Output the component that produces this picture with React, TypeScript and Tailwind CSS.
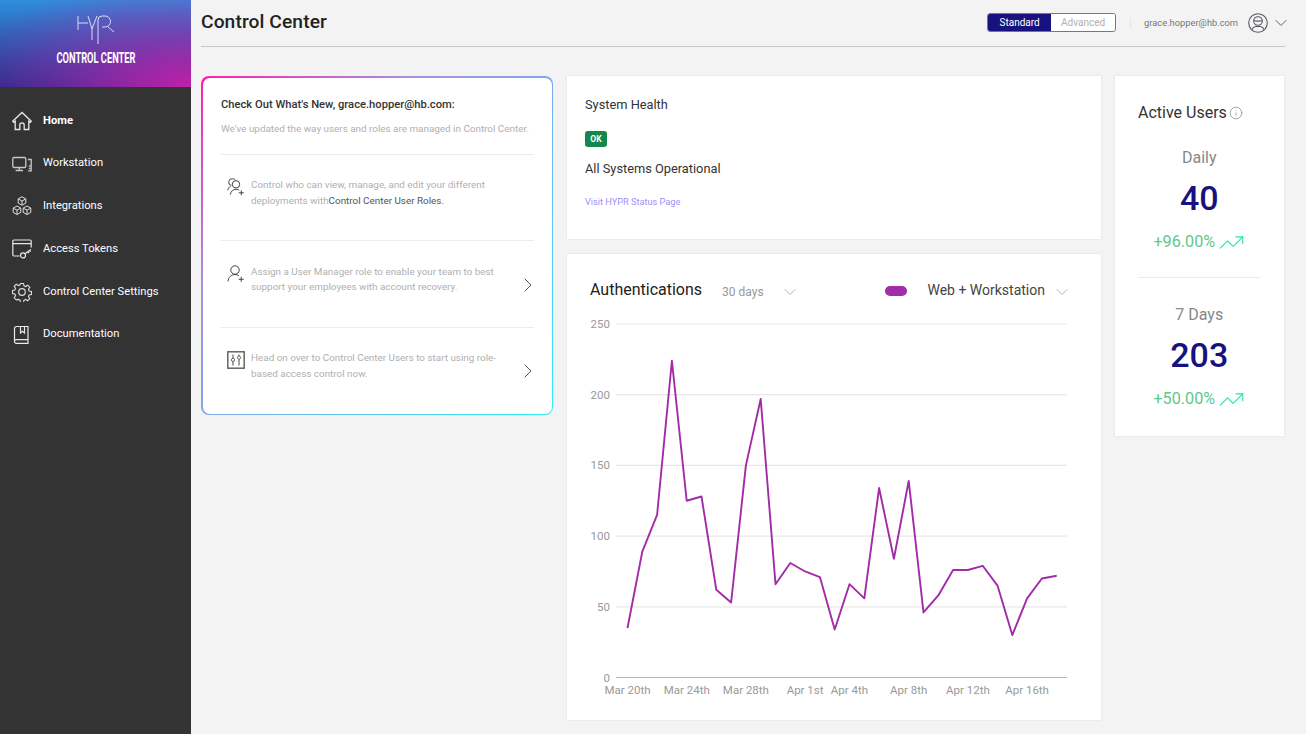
import React from 'react';
import { ChevronDown, ChevronRight, Info, TrendingUp } from 'lucide-react';

const points = [35, 89, 115, 224, 125, 128, 62, 53, 150, 197, 66, 81, 75, 71, 34, 66, 56, 134, 84, 139, 46, 58, 76, 76, 79, 65, 30, 56, 70, 72];
const xFor = (i: number) => 627.5 + i * 14.8;
const yFor = (v: number) => 677.5 - v * 1.414;

const HomeIcon = () => (
  <svg width="20" height="20" viewBox="0 0 20 20" fill="none" stroke="currentColor" strokeWidth="1.300">
    <path d="M.7 10.200 10 1.500l9.300 8.700-1.200 1.200-1.300-1.200v8.300h-4.600v-4.500a2.200 2.200 0 0 0-4.400 0v4.500H3.200V10.200l-1.300 1.200z" />
  </svg>
);
const WorkstationIcon = () => (
  <svg width="20" height="20" viewBox="0 0 20 20" fill="none" stroke="#c8c8c8" strokeWidth="1.300">
    <rect x=".8" y="3.500" width="13" height="10" rx="1.200" />
    <path d="M7.300 13.500v2.500M3.600 16.500h7.400M16 5.500h3.200v11.300H16M16.800 12h1.600M16.800 14.500h1.600" />
  </svg>
);
const IntegrationsIcon = () => (
  <svg width="20" height="20" viewBox="0 0 20 20" fill="none" stroke="#dcdcdc" strokeWidth="1">
    <path d="m10 .8 3.800 2.100v4.200L10 9.200 6.200 7.100V2.900zM6.200 2.900 10 5l3.800-2.100M10 5v4.200" />
    <path d="m5 10 3.800 2.100v4.300L5 18.500l-3.800-2.100v-4.300zM1.200 12.100 5 14.200l3.800-2.100M5 14.200v4.300" />
    <path d="m15 10 3.800 2.100v4.300L15 18.500l-3.800-2.100v-4.300zM11.200 12.100l3.800 2.100 3.800-2.100M15 14.200v4.300" />
  </svg>
);
const TokenIcon = () => (
  <svg width="20" height="20" viewBox="0 0 20 20" fill="none" stroke="currentColor" strokeWidth="1.200">
    <path d="M7.500 17H2a1.200 1.200 0 0 1-1.200-1.200V2.200A1.200 1.200 0 0 1 2 1h16a1.200 1.200 0 0 1 1.200 1.200v6.300M.8 4.600h18.400" />
    <circle cx="11" cy="16.400" r="2.500" />
    <path d="m13 14.800 5.800-4.300M15.800 12.700l1.300 1.500M17.600 11.400l1 1.200" />
  </svg>
);
const SettingsIcon = () => (
  <svg width="20" height="20" viewBox="0 0 20 20" fill="none" stroke="#dcdcdc" strokeWidth="1.200">
    <circle cx="10" cy="10" r="3.300" />
    <path d="M8.400 1h3.200l.5 2.500 1.700.7 2.200-1.400 2.200 2.200-1.400 2.200.7 1.700 2.500.5v3.200l-2.500.5-.7 1.700 1.400 2.200-2.200 2.200-2.200-1.400-1.700.7-.5 2.500H8.400l-.5-2.500-1.700-.7L4 18.300l-2.200-2.200 1.400-2.200-.7-1.700L0 11.600V8.400l2.500-.5.700-1.700-1.400-2.200L4 1.800l2.200 1.400 1.700-.7z" transform="translate(.5 .5) scale(.95)" />
  </svg>
);
const BookIcon = () => (
  <svg width="20" height="20" viewBox="0 0 20 20" fill="none" stroke="currentColor" strokeWidth="1.200">
    <path d="M2.500 16.500V3.500a2 2 0 0 1 2-2h11.500v13.200H4.300a1.800 1.800 0 0 0-1.800 1.800 1.900 1.900 0 0 0 1.900 1.900H16v-3.700" />
    <path d="M8.500 1.500v6.500l2-1.700 2 1.700V1.500" />
  </svg>
);
const UsersPlusIcon = () => (
  <svg width="18" height="18" viewBox="0 0 18 18" fill="none" stroke="#444" strokeWidth="1">
    <path d="M4.400 7.400A3.300 3.300 0 0 1 5.700.8c1.300 0 2.300.6 2.800 1.500M.7 12.200c.4-2 1.400-3.400 3-4" />
    <circle cx="9" cy="6.300" r="3.700" />
    <path d="M3.400 16.500c.4-3.200 2.600-5.200 5.600-5.200 1.300 0 2.300.3 3.200.9M14.300 12.300v5M11.800 14.800h5" />
  </svg>
);
const UserPlusIcon = () => (
  <svg width="18" height="18" viewBox="0 0 18 18" fill="none" stroke="#444" strokeWidth="1">
    <circle cx="8" cy="5" r="4.200" />
    <path d="M1 16.500c.4-4 3-7 7-7 1.500 0 2.800.4 3.800 1.200M14.200 11.800v5M11.700 14.300h5" />
  </svg>
);
const SlidersIcon = () => (
  <svg width="18" height="18" viewBox="0 0 18 18" fill="none" stroke="#666" strokeWidth="1">
    <rect x=".8" y=".8" width="16.400" height="16.400" strokeWidth="1.500" />
    <path d="M6 3.500v3.800M6 10.500v4M12 3.500v1.500M12 8.200v6.300" strokeWidth="1.200" />
    <circle cx="6" cy="8.900" r="1.600" />
    <circle cx="12" cy="6.600" r="1.600" />
  </svg>
);
const AvatarIcon = () => (
  <svg width="20" height="20" viewBox="0 0 20 20" fill="none" stroke="#555566" strokeWidth="1.100">
    <circle cx="10" cy="10" r="9.300" />
    <circle cx="10" cy="8" r="4.300" />
    <path d="M5.800 7.500c2.500.8 5.900.8 8.400 0M3.800 16.800c.8-2 2.200-3 3.700-3.300h5c1.500.3 2.900 1.300 3.700 3.300" />
  </svg>
);

const navItems = [
  { label: 'Home', icon: <HomeIcon />, active: true },
  { label: 'Workstation', icon: <WorkstationIcon /> },
  { label: 'Integrations', icon: <IntegrationsIcon /> },
  { label: 'Access Tokens', icon: <TokenIcon /> },
  { label: 'Control Center Settings', icon: <SettingsIcon /> },
  { label: 'Documentation', icon: <BookIcon /> },
];

const Sidebar = () => (
  <aside className="w-[191px] shrink-0 bg-[#333333] text-white">
    <div className="h-[87px] flex flex-col items-center bg-[radial-gradient(ellipse_at_bottom_right,#c021aa_0%,rgba(170,40,170,0.55)_45%,transparent_90%),linear-gradient(to_bottom,#2f8fdd,#1b2a86)]">
      <svg className="mt-[15px]" width="38" height="30" viewBox="0 0 38 30" fill="none" stroke="#dcdcf0" strokeWidth="1">
        <path d="M1 1v14M1 8h10M11 1l4 13v11M15 14l5-13M21 29V5a4 4 0 0 1 4-4h3a5.500 5.500 0 0 1 0 11h-3M30 11l7 6" />
      </svg>
      <div className="mt-[5px] w-[130px] text-center scale-x-[0.64] font-bold text-[14.500px] leading-[17px]">CONTROL CENTER</div>
    </div>
    <nav className="pt-[12.500px]">
      {navItems.map((item) => (
        <div key={item.label} className="h-[42.800px] flex items-center pl-3 gap-[11px]">
          <span className="text-[#e8e8e8]">{item.icon}</span>
          <span className={`text-[11.200px] ${item.active ? 'font-bold' : ''}`}>{item.label}</span>
        </div>
      ))}
    </nav>
  </aside>
);

const Header = () => (
  <header className="h-[47px] flex items-center justify-between border-b border-[#c8c8cc] mr-[21px]">
    <h1 className="text-[19.200px] text-[#222] tracking-[0.1px] font-medium -mt-[1px]">Control Center</h1>
    <div className="flex items-center -mt-[1px]">
      <div className="flex h-[19px] w-[129px] rounded-[3px] border border-[#77777f] overflow-hidden text-[10px]">
        <div className="w-[63px] bg-[#17127f] text-white flex items-center justify-center">Standard</div>
        <div className="flex-1 bg-white text-[#b0b0b0] flex items-center justify-center">Advanced</div>
      </div>
      <div className="ml-[14px] w-px h-[10px] bg-[#e4e4e4]" />
      <span className="ml-[13px] text-[9.300px] text-[#777]">grace.hopper@hb.com</span>
      <span className="ml-[10px]"><AvatarIcon /></span>
      <ChevronDown className="ml-[3px] -mr-[6px] text-[#444]" size={20} strokeWidth={1} />
    </div>
  </header>
);

const rows = [
  {
    icon: <UsersPlusIcon />,
    chevron: false,
    text: (
      <>
        <span className="block">Control who can view, manage, and edit your different</span>
        <span className="flex">
          <span>deployments with</span>
          <span className="text-[#555]">Control Center User Roles.</span>
        </span>
      </>
    ),
  },
  { icon: <UserPlusIcon />, chevron: true, text: <>Assign a User Manager role to enable your team to best support your employees with account recovery.</> },
  { icon: <SlidersIcon />, chevron: true, text: <>Head on over to Control Center Users to start using role-based access control now.</> },
];

const WhatsNew = () => (
  <div className="h-[339px] rounded-[8px] p-[1.500px] bg-[linear-gradient(135deg,#ff1fb0_0%,#a78fe0_30%,#6fb4ee_60%,#2ff0f5_100%)]">
    <div className="h-full rounded-[7px] bg-white pl-[18.500px] pr-[18px]">
      <div className="pt-[19px] text-[11.200px] leading-[16px] text-[#333] font-medium">Check Out What's New, grace.hopper@hb.com:</div>
      <div className="mt-[8px] text-[9.900px] leading-[16px] text-[#b0b0b0]">We've updated the way users and roles are managed in Control Center.</div>
      <div className="mt-[17px]">
        {rows.map((row, i) => (
          <div key={i} className="h-[86.500px] border-t border-[#ececec] pt-[22.500px] pl-[6px] flex">
            <span className="mt-[1px] w-[24px] shrink-0">{row.icon}</span>
            <div className="w-[250px] text-[9.900px] leading-[15.800px] text-[#b0b0b0]">{row.text}</div>
            {row.chevron && <ChevronRight className="ml-auto -mr-[6.500px] mt-[9px] text-[#555]" size={24} strokeWidth={1} />}
          </div>
        ))}
      </div>
    </div>
  </div>
);

const SystemHealth = () => (
  <div className="h-[163px] bg-white shadow-[0_0_2px_rgba(0,0,0,0.1)] pl-[18px] pt-[21px]">
    <div className="text-[12.800px] leading-[16px] text-[#333]">System Health</div>
    <div className="mt-[18px] w-[22px] h-[16px] rounded-[3px] bg-[#14874f] text-white text-[8.500px] font-bold flex items-center justify-center">OK</div>
    <div className="mt-[14px] text-[12.800px] leading-[16px] text-[#333]">All Systems Operational</div>
    <div className="mt-[17px] text-[9.200px] leading-[16px] text-[#9d90f5]">Visit HYPR Status Page</div>
  </div>
);

const ticks = [0, 50, 100, 150, 200, 250];
const dates = [
  { i: 0, label: 'Mar 20th' },
  { i: 4, label: 'Mar 24th' },
  { i: 8, label: 'Mar 28th' },
  { i: 12, label: 'Apr 1st' },
  { i: 15, label: 'Apr 4th' },
  { i: 19, label: 'Apr 8th' },
  { i: 23, label: 'Apr 12th' },
  { i: 27, label: 'Apr 16th' },
];

const Chart = () => (
  <svg className="block" width="534" height="410" viewBox="567 310 534 410">
    {ticks.map((t) => (
      <g key={t}>
        <line x1="616" x2="1067" y1={yFor(t)} y2={yFor(t)} stroke={t === 0 ? '#b8b8b8' : '#e8e8e8'} strokeWidth="1.200" />
        <text x="610" y={yFor(t) + 4} textAnchor="end" fontSize="11.500" fontFamily="Roboto, sans-serif" fill="#999">{t}</text>
      </g>
    ))}
    {dates.map((d) => (
      <text key={d.label} x={xFor(d.i)} y="694" textAnchor="middle" fontSize="11.500" fontFamily="Roboto, sans-serif" fill="#999">{d.label}</text>
    ))}
    <polyline fill="none" stroke="#a12ba8" strokeWidth="1.900" strokeLinejoin="round" points={points.map((v, i) => `${xFor(i)},${yFor(v)}`).join(' ')} />
  </svg>
);

const Authentications = () => (
  <div className="h-[466px] bg-white shadow-[0_0_2px_rgba(0,0,0,0.1)]">
    <div className="h-[56px] flex items-center pl-[23px] pr-[29px] pt-[16px]">
      <span className="text-[16px] text-[#222]">Authentications</span>
      <span className="ml-[20px] mt-[3px] text-[12px] text-[#999]">30 days</span>
      <ChevronDown className="ml-[16px] mt-[3px] text-[#aaa]" size={20} strokeWidth={1} />
      <span className="ml-auto mt-[2px] w-[22px] h-[10px] rounded-full bg-[#a12ba8]" />
      <span className="ml-[20px] mt-[1px] text-[14px] text-[#444]">Web + Workstation</span>
      <ChevronDown className="ml-[7px] mt-[3px] text-[#aaa]" size={20} strokeWidth={1} />
    </div>
    <Chart />
  </div>
);

const Stat = ({ label, value, change }: { label: string; value: string; change: string }) => (
  <div className="flex flex-col items-center">
    <div className="text-[16px] leading-[22px] text-[#888]">{label}</div>
    <div className="mt-[9px] text-[34px] leading-[40px] font-medium text-[#17127f]">{value}</div>
    <div className="mt-[12px] flex items-center gap-[3px] text-[16.200px] leading-[24px] text-[#5fc88a]">
      {change}
      <TrendingUp className="-my-[2px] text-[#27e6a0]" size={27} strokeWidth={1} />
    </div>
  </div>
);

const ActiveUsers = () => (
  <div className="h-[359.500px] bg-white shadow-[0_0_2px_rgba(0,0,0,0.1)] px-[23px] pt-[27px]">
    <div className="flex items-center gap-[2px] text-[16px] leading-[20px] text-[#333]">
      Active Users
      <Info className="text-[#999]" size={14} strokeWidth={1.500} />
    </div>
    <div className="mt-[24px]"><Stat label="Daily" value="40" change="+96.00%" /></div>
    <div className="mt-[23px] border-t border-[#ececec]" />
    <div className="mt-[26px]"><Stat label="7 Days" value="203" change="+50.00%" /></div>
  </div>
);

export default function App() {
  return (
    <div className="flex h-screen w-full overflow-hidden bg-[#f3f3f3] font-['Roboto',sans-serif]">
      <Sidebar />
      <main className="flex-1 pl-[10px]">
        <Header />
        <div className="mt-[29px] flex items-start gap-[14px]">
          <div className="w-[352px] shrink-0"><WhatsNew /></div>
          <div className="w-[534px] shrink-0 flex flex-col gap-[15px]">
            <SystemHealth />
            <Authentications />
          </div>
          <div className="w-[168.500px] shrink-0"><ActiveUsers /></div>
        </div>
      </main>
    </div>
  );
}
